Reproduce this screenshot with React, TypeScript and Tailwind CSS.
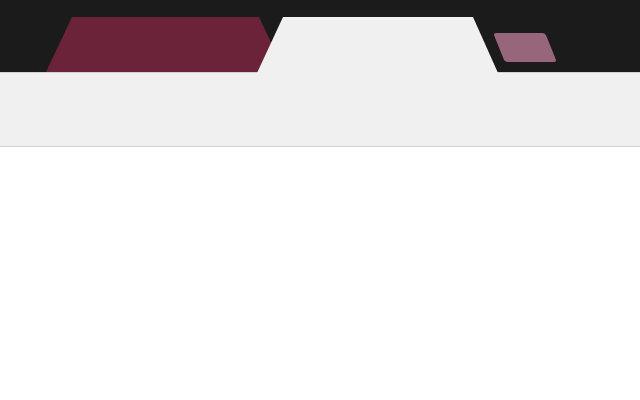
export default function App() {
  return (
    <div className="w-[640px] h-[400px] bg-white overflow-hidden font-['Liberation_Sans',sans-serif]">
      <div className="h-[72px] bg-[#1b1b1b] flex items-end pl-[46px]">
        <div className="w-[239px] h-[55px] bg-[#6b2339] [clip-path:polygon(26px_0,calc(100%-26px)_0,100%_100%,0_100%)]" />
        <div className="relative z-10 -ml-[28px] -mb-px w-[241px] h-[56px] bg-[#f0f0f0] [clip-path:polygon(26px_0,calc(100%-25px)_0,100%_100%,0_100%)]" />
        <div className="self-start mt-[33px] -ml-[-1px] w-[52px] h-[29px] rounded-[3px] bg-[#98667a] skew-x-[22deg]" />
      </div>
      <div className="h-[75px] bg-[#f0f0f0] border-t border-b border-[#d2d2d2]" />
    </div>
  );
}
